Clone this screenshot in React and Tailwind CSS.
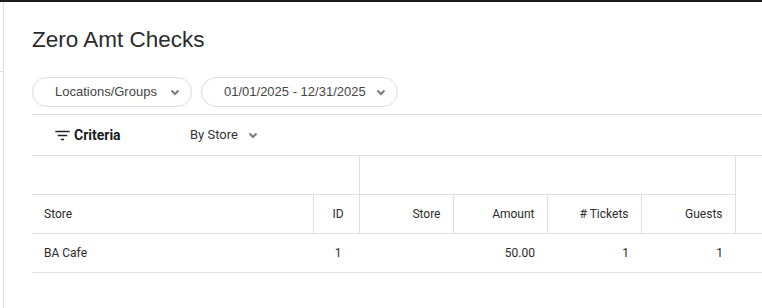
import React from "react";

const Chevron = ({ className = "" }) => (
  <svg width="10" height="7" viewBox="0 0 10 7" className={className}>
    <polyline points="1.5,1.5 5,5 8.5,1.5" fill="none" stroke="#7a7a7a" strokeWidth="2" />
  </svg>
);

const FilterIcon = () => (
  <svg width="19" height="19" viewBox="0 0 24 24" fill="#222">
    <path d="M10 18h4v-2h-4v2zM3 6v2h18V6H3zm3 7h12v-2H6v2z" />
  </svg>
);

const Pill = ({ label, width }) => (
  <div
    className={`flex items-center justify-between h-[30px] rounded-full border border-[#dcdcdc] pl-[22px] pr-[11px] text-[13px] text-[#444] ${width}`}
    style={{ fontFamily: '"Liberation Sans", Arial, sans-serif' }}
  >
    <span>{label}</span>
    <Chevron />
  </div>
);

const COLS = [
  { label: "Store", w: "w-[281px]", align: "text-left pl-3" },
  { label: "ID", w: "w-[46px]", align: "text-center pl-1" },
  { label: "Store", w: "w-[94px]", align: "text-right pr-3" },
  { label: "Amount", w: "w-[94px]", align: "text-right pr-3" },
  { label: "# Tickets", w: "w-[94px]", align: "text-right pr-3" },
  { label: "Guests", w: "w-[94px]", align: "text-right pr-3" },
];

const ROW = ["BA Cafe", "1", "", "50.00", "1", "1"];

export default function App() {
  return (
    <div className="w-[762px] h-[308px] bg-white border-t-2 border-[#1c1c1c] flex overflow-hidden">
      {/* thin left rail */}
      <div className="w-[4px] shrink-0 border-r border-[#dedede]">
        <div className="h-[70px] border-b border-[#dedede]" />
      </div>

      <div className="flex-1 pl-[28px]">
        <h1
          className="mt-[24px] text-[22.5px] leading-[28px] text-[#2b2b2b]"
          style={{ fontFamily: '"Liberation Sans", Arial, sans-serif' }}
        >
          Zero Amt Checks
        </h1>

        <div className="flex gap-[9px] mt-[23px]">
          <Pill label="Locations/Groups" width="w-[160px]" />
          <Pill label="01/01/2025 - 12/31/2025" width="w-[197px]" />
        </div>

        <div style={{ fontFamily: "Roboto, sans-serif" }}>
          <div className="mt-[7px] border-t border-[#dedede] h-[42px] flex items-center border-b">
            <div className="flex items-center gap-[2px] pl-[21px] w-[158px]">
              <FilterIcon />
              <span className="text-[14px] font-bold text-[#1a1a1a]">Criteria</span>
            </div>
            <div className="flex items-center gap-[10px] text-[13px] text-[#333]">
              <span>By Store</span>
              <Chevron />
            </div>
          </div>

          <table className="border-collapse text-[12px] text-[#2b2b2b] table-fixed w-[760px]">
            <colgroup>
              <col className="w-[281px]" />
              <col className="w-[46px]" />
              <col className="w-[94px]" />
              <col className="w-[94px]" />
              <col className="w-[94px]" />
              <col className="w-[94px]" />
              <col />
            </colgroup>
            <thead>
              <tr className="h-[38px]">
                <th colSpan={2} className="border-r border-[#dedede] p-0" />
                <th colSpan={4} className="border-r border-[#dedede] p-0" />
                <th rowSpan={2} className="p-0" />
              </tr>
              <tr className="h-[39px] border-t border-[#dedede]">
                {COLS.map((c, i) => (
                  <th
                    key={i}
                    className={`${c.align} font-normal border-r border-[#dedede] whitespace-nowrap`}
                  >
                    {c.label}
                  </th>
                ))}
              </tr>
            </thead>
            <tbody>
              <tr className="h-[39px] border-t border-b border-[#dedede]">
                {COLS.map((c, i) => (
                  <td key={i} className={`${c.align} whitespace-nowrap`}>
                    {ROW[i]}
                  </td>
                ))}
                <td />
              </tr>
            </tbody>
          </table>
        </div>
      </div>
    </div>
  );
}
